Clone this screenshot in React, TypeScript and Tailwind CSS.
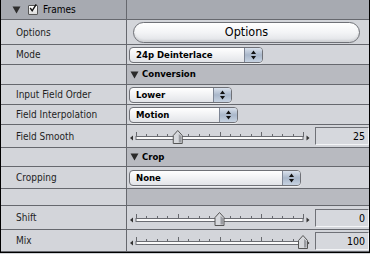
import React from 'react';

const font = { fontFamily: '"DejaVu Sans Condensed", "DejaVu Sans", Verdana, sans-serif' };

const Popup = ({ label, width }: { label: string; width: string }) => (
  <div
    className={`flex h-[16px] ${width} items-stretch rounded-[4px] border border-[#6f7177] bg-gradient-to-b from-[#ffffff] via-[#f1f2f4] to-[#e2e4e8] shadow-[0_1px_0_rgba(255,255,255,0.6)]`}
  >
    <span className="flex-1 truncate pl-[6px] text-[9.5px] font-bold leading-[14px] text-black">{label}</span>
    <span className="flex w-[18px] flex-col items-center justify-center rounded-r-[3px] border-l border-[#7d8594] bg-gradient-to-b from-[#dae2ed] via-[#a9b7ca] to-[#c7d3e2]">
      <svg width="7" height="10" viewBox="0 0 7 10">
        <path d="M3.5 0.5 L6 4 L1 4 Z" fill="#111" />
        <path d="M3.5 9.5 L6 6 L1 6 Z" fill="#111" />
      </svg>
    </span>
  </div>
);

const Slider = ({ value, min, max }: { value: number; min: number; max: number }) => {
  const x0 = 7;
  const x1 = 174;
  const pos = x0 + ((value - min) / (max - min)) * (x1 - x0);
  const ticks = Array.from({ length: 17 }, (_, i) => x0 + (i * (x1 - x0)) / 16);
  return (
    <div className="flex items-center">
      <svg width="185" height="20" viewBox="0 0 185 20" className="shrink-0">
        <path d="M1 12 L4 9.5 L4 14.5 Z" fill="#333" />
        {ticks.map((t, i) => (
          <line key={i} x1={Math.round(t) + 0.5} x2={Math.round(t) + 0.5} y1={i % 4 === 0 ? 6 : 8} y2={11} stroke="#66686d" strokeWidth="1" />
        ))}
        <rect x={x0} y={10.5} width={x1 - x0} height={3} fill="#fafafa" stroke="#6a6c72" strokeWidth="1" />
        <path d="M180.5 12 L177.5 9.5 L177.5 14.5 Z" fill="#333" />
        <path
          d={`M${pos - 4.5} 17.5 L${pos - 4.5} 9.5 L${pos} 4.5 L${pos + 4.5} 9.5 L${pos + 4.5} 17.5 Z`}
          fill="#d6d8dc"
          stroke="#555"
          strokeWidth="1"
        />
        <path d={`M${pos + 1} 8 L${pos + 3.5} 10 L${pos + 3.5} 16.5 L${pos + 1} 16.5 Z`} fill="#9a9ca1" />
      </svg>
      <div className="ml-[1px] h-[18px] w-[54px] border border-t-[#6f7177] border-l-[#6f7177] border-r-[#f3f4f6] border-b-[#f3f4f6] bg-[#d6d8dd] pr-[3px] text-right text-[10.5px] leading-[16px] text-black">
        {value}
      </div>
    </div>
  );
};

const Row = ({
  label,
  h,
  rightBg = 'bg-[#d3d5da]',
  children
}: {
  label?: string;
  h: string;
  rightBg?: string;
  children?: React.ReactNode;
}) => (
  <div className={`flex ${h} border-b border-[#66686e]`}>
    <div className="flex w-[126px] shrink-0 items-center border-r border-[#66686e] bg-[#d3d5da] pl-[15px] text-[10px] text-[#1e1e1e]">
      {label}
    </div>
    <div className={`flex flex-1 items-center pl-[2px] ${rightBg}`}>{children}</div>
  </div>
);

const SectionRow = ({ title, h }: { title: string; h: string }) => (
  <Row h={h} rightBg="bg-[#b8bac0]">
    <span className="flex items-center gap-[3px] pl-[1px] text-[9.5px] font-bold text-black">
      <svg width="9" height="8" viewBox="0 0 9 8">
        <path d="M0.5 0.5 L8.5 0.5 L4.5 7.5 Z" fill="#2a2a2a" />
      </svg>
      {title}
    </span>
  </Row>
);

export default function App() {
  return (
    <div className="h-[254px] w-[370px] overflow-hidden bg-[#d3d5da]" style={font}>
      <div className="flex flex-col border-x border-b border-black">
        <div className="flex h-[20px] border-b border-[#66686e] bg-[#a7aab1]">
          <div className="flex w-[126px] shrink-0 items-center border-r border-[#66686e] pl-[11px] text-[10px] text-black">
            <svg width="9" height="8" viewBox="0 0 9 8" className="mr-[7px]">
              <path d="M0.5 0.5 L8.5 0.5 L4.5 7.5 Z" fill="#2e2e2e" />
            </svg>
            <span className="mr-[5px] flex h-[10px] w-[10px] items-center justify-center rounded-[1px] border border-[#555] bg-gradient-to-b from-white to-[#dcdcdc]">
              <svg width="10" height="10" viewBox="0 0 10 10" className="-mt-[3px]">
                <path d="M1.5 5 L4 8.5 L9 0.5" fill="none" stroke="#111" strokeWidth="1.8" />
              </svg>
            </span>
            Frames
          </div>
          <div className="flex-1" />
        </div>

        <Row label="Options" h="h-[25px]">
          <div className="ml-[4px] flex h-[21px] w-[227px] items-center justify-center rounded-full border border-[#6f7177] bg-gradient-to-b from-[#ffffff] via-[#f3f4f6] to-[#dfe1e5] text-[12.5px] text-black shadow-[inset_0_-2px_2px_rgba(0,0,0,0.08)]">
            Options
          </div>
        </Row>
        <Row label="Mode" h="h-[20px]">
          <Popup label="24p Deinterlace" width="w-[134px]" />
        </Row>
        <SectionRow title="Conversion" h="h-[20px]" />
        <Row label="Input Field Order" h="h-[20px]">
          <Popup label="Lower" width="w-[103px]" />
        </Row>
        <Row label="Field Interpolation" h="h-[20px]">
          <Popup label="Motion" width="w-[109px]" />
        </Row>
        <Row label="Field Smooth" h="h-[23px]">
          <Slider value={25} min={0} max={100} />
        </Row>
        <SectionRow title="Crop" h="h-[19px]" />
        <Row label="Cropping" h="h-[22px]">
          <Popup label="None" width="w-[172px]" />
        </Row>
        <Row h="h-[17px]" rightBg="bg-[#b8bac0]" />
        <Row label="Shift" h="h-[24px]">
          <Slider value={0} min={-100} max={100} />
        </Row>
        <Row label="Mix" h="h-[22px]">
          <Slider value={100} min={0} max={100} />
        </Row>
      </div>
    </div>
  );
}
